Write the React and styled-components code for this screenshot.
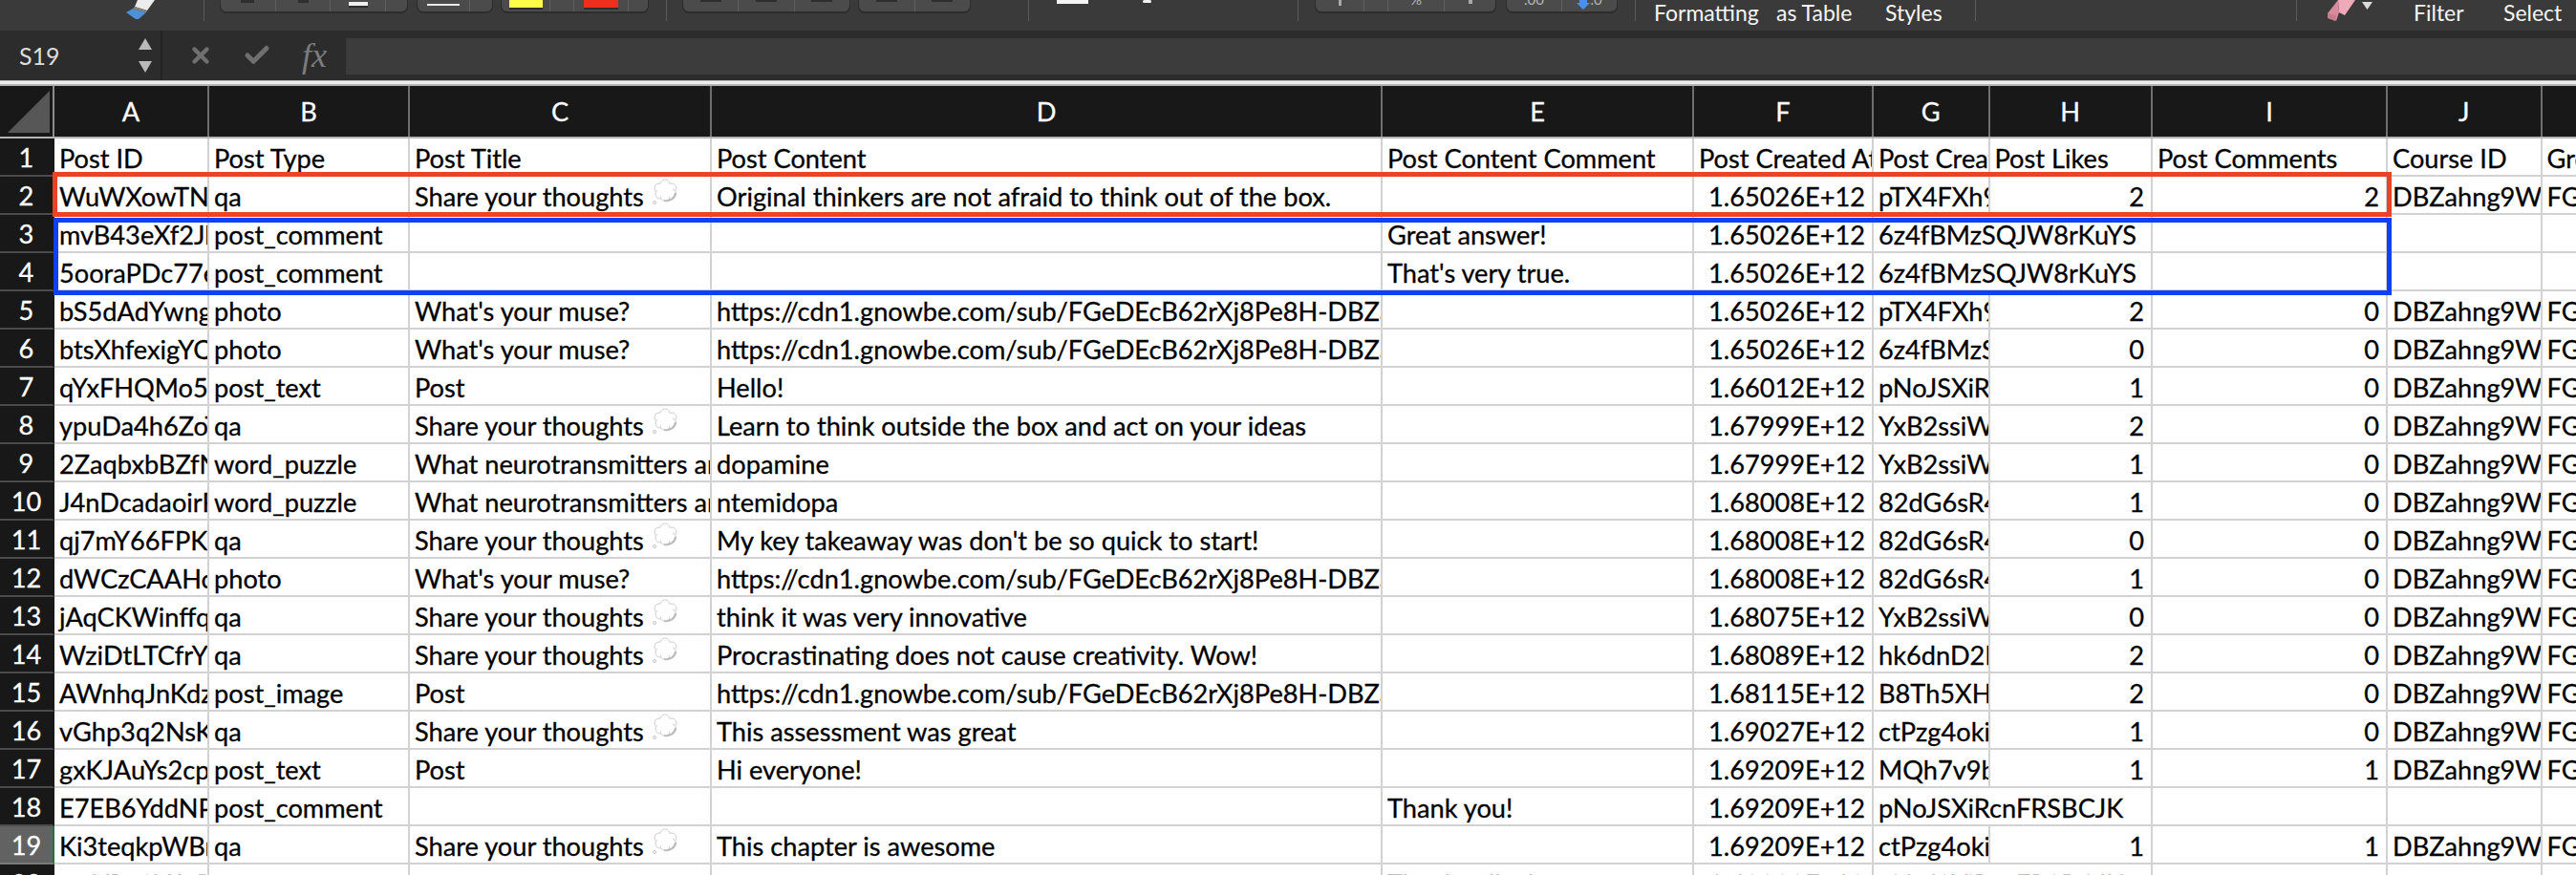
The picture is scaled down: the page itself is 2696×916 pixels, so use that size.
import React from "react";
import styled, { createGlobalStyle } from "styled-components";
import { X, Check } from "lucide-react";

const FONT = `Lato, "Open Sans", sans-serif`;
// K is wider than the window, so its letter falls outside the picture
const COLUMNS = "57px 162px 210px 316px 702px 326px 188px 121.5px 170.5px 246px 161.5px 200px";

const LETTERS = ["A", "B", "C", "D", "E", "F", "G", "H", "I", "J", "K"];

const THOUGHTS = "Share your thoughts";
const MUSE = "What's your muse?";
const NEURO = "What neurotransmitters are involved";
const CDN = "https://cdn1.gnowbe.com/sub/FGeDEcB62rXj8Pe8H-DBZahng9WIabc";

const rest = (likes, comments) => [likes, comments, "DBZahng9WIabcdef", "FGeDEcB62rXj8Pe8H"];

// A: id, B: type, C: title, D: content, E: comment, F: created at, G: creator, then H..K
const ROWS = [
  ["Post ID", "Post Type", "Post Title", "Post Content", "Post Content Comment", "Post Created At", "Post Creator ID", "Post Likes", "Post Comments", "Course ID", "Group ID"],
  ["WuWXowTNxyzab", "qa", THOUGHTS, "Original thinkers are not afraid to think out of the box.", "", "1.65026E+12", "pTX4FXh9abcd", ...rest(2, 2)],
  ["mvB43eXf2JlQw", "post_comment", "", "", "Great answer!", "1.65026E+12", "6z4fBMzSQJW8rKuYS"],
  ["5ooraPDc77eRt", "post_comment", "", "", "That's very true.", "1.65026E+12", "6z4fBMzSQJW8rKuYS"],
  ["bS5dAdYwngHjk", "photo", MUSE, CDN, "", "1.65026E+12", "pTX4FXh9abcd", ...rest(2, 0)],
  ["btsXhfexigYQnm", "photo", MUSE, CDN, "", "1.65026E+12", "6z4fBMzSQJW8", ...rest(0, 0)],
  ["qYxFHQMo5lKpr", "post_text", "Post", "Hello!", "", "1.66012E+12", "pNoJSXiRcnFR", ...rest(1, 0)],
  ["ypuDa4h6ZoTgb", "qa", THOUGHTS, "Learn to think outside the box and act on your ideas", "", "1.67999E+12", "YxB2ssiWJabc", ...rest(2, 0)],
  ["2ZaqbxbBZfNcv", "word_puzzle", NEURO, "dopamine", "", "1.67999E+12", "YxB2ssiWJabc", ...rest(1, 0)],
  ["J4nDcadaoirFwe", "word_puzzle", NEURO, "ntemidopa", "", "1.68008E+12", "82dG6sR4abcd", ...rest(1, 0)],
  ["qj7mY66FPKsdf", "qa", THOUGHTS, "My key takeaway was don't be so quick to start!", "", "1.68008E+12", "82dG6sR4abcd", ...rest(0, 0)],
  ["dWCzCAAHcrUio", "photo", MUSE, CDN, "", "1.68008E+12", "82dG6sR4abcd", ...rest(1, 0)],
  ["jAqCKWinffqPl", "qa", THOUGHTS, "think it was very innovative", "", "1.68075E+12", "YxB2ssiWJabc", ...rest(0, 0)],
  ["WziDtLTCfrY9mn", "qa", THOUGHTS, "Procrastinating does not cause creativity. Wow!", "", "1.68089E+12", "hk6dnD2Labcd", ...rest(2, 0)],
  ["AWnhqJnKdzGhj", "post_image", "Post", CDN, "", "1.68115E+12", "B8Th5XHLabcd", ...rest(2, 0)],
  ["vGhp3q2NsKzxc", "qa", THOUGHTS, "This assessment was great", "", "1.69027E+12", "ctPzg4okiabc", ...rest(1, 0)],
  ["gxKJAuYs2cpVb", "post_text", "Post", "Hi everyone!", "", "1.69209E+12", "MQh7v9bkabcd", ...rest(1, 1)],
  ["E7EB6YddNPqwe", "post_comment", "", "", "Thank you!", "1.69209E+12", "pNoJSXiRcnFRSBCJK"],
  ["Ki3teqkpWBrTy", "qa", THOUGHTS, "This chapter is awesome", "", "1.69209E+12", "ctPzg4okiabc", ...rest(1, 1)],
  ["mvXRo3YdnPxcv", "post_comment", "", "", "Thanks all, ok", "1.69209E+12", "pNoJSXiRcnFRSBCJK"],
];

const GlobalStyle = createGlobalStyle`
  html, body {
    margin: 0;
    height: 100%;
    overflow: hidden;
    background: #fff;
  }
  #root {
    height: 916px;
    overflow: hidden;
    font-family: ${FONT};
  }
`;

/* Ribbon, cut off at the top of the picture */
const Ribbon = styled.div`
  display: flex;
  align-items: flex-start;
  height: 32px;
  padding-left: 132px;
  background: #3a3a3a;
  overflow: hidden;
`;

const Sep = styled.div`
  flex: none;
  width: 1px;
  height: 22px;
  margin-left: ${(p) => p.$ml}px;
  background: #5a5a5a;
`;

const ToolGroup = styled.div`
  flex: none;
  display: flex;
  width: ${(p) => p.$w}px;
  height: 12px;
  margin-left: ${(p) => p.$ml}px;
  background: #4b4b4b;
  border-radius: 0 0 6px 6px;
  box-shadow: 0 1px 0 1px #2d2d2d;
  overflow: hidden;
`;

const ToolCell = styled.div`
  flex: ${(p) => (p.$w ? `0 0 ${p.$w}px` : "1 1 0")};
  display: flex;
  justify-content: center;
  align-items: flex-start;
  border-right: 1px solid #5f5f5f;
  &:last-child {
    border-right: 0;
  }
`;

const Glyph = styled.div`
  width: ${(p) => p.$w}px;
  height: ${(p) => p.$h}px;
  margin-top: ${(p) => p.$top || 0}px;
  background: ${(p) => p.$color};
  box-shadow: ${(p) => (p.$shadow ? "0 2px 0 #2e2e2e" : "none")};
`;

const ColorSwatch = styled(Glyph)`
  margin-left: ${(p) => p.$ml || 0}px;
  flex: none;
`;

const TinyText = styled.span`
  font-size: 15px;
  line-height: 15px;
  margin-top: -8px;
  color: ${(p) => p.$color || "#b5b5b5"};
`;

const PaperBit = styled.div`
  flex: none;
  width: ${(p) => p.$w}px;
  height: ${(p) => p.$h}px;
  margin-left: ${(p) => p.$ml}px;
  background: #f4f4f4;
  border-radius: ${(p) => p.$r || 0}px;
`;

const RibbonLabel = styled.div`
  flex: none;
  width: ${(p) => p.$w}px;
  margin-left: ${(p) => p.$ml}px;
  font-size: 23px;
  line-height: 26px;
  color: #f6f6f6;
  white-space: nowrap;
`;

const IconSlot = styled.svg`
  flex: none;
  display: block;
  margin-left: ${(p) => p.$ml || 0}px;
`;

/* Name box and formula input */
const FormulaBar = styled.div`
  display: flex;
  align-items: stretch;
  height: 52px;
  background: #2c2c2c;
`;

const NameBox = styled.div`
  flex: 0 0 170px;
  box-sizing: border-box;
  display: flex;
  align-items: center;
  justify-content: space-between;
  padding: 0 9px 0 20px;
  border-right: 2px solid #232323;
  font-size: 25px;
  color: #dcdcdc;
`;

const Stepper = styled.div`
  display: flex;
  flex-direction: column;
  gap: 12px;
`;

const Arrow = styled.div`
  width: 0;
  height: 0;
  border-left: 7px solid transparent;
  border-right: 7px solid transparent;
  border-${(p) => (p.$down ? "top" : "bottom")}: 12px solid #b9b9b9;
`;

const FormulaActions = styled.div`
  flex: 0 0 192px;
  box-sizing: border-box;
  display: flex;
  align-items: center;
  padding-left: 27px;
  gap: 31px;
  color: #6f6f6f;
`;

const FxLabel = styled.span`
  margin-left: 1px;
  font-family: "Liberation Serif", serif;
  font-style: italic;
  font-size: 36px;
  line-height: 36px;
  color: #7c7c7c;
`;

const FormulaInput = styled.div`
  flex: 1;
  margin: 8px 0 6px;
  background: #3c3c3c;
`;

const Divider = styled.div`
  box-sizing: border-box;
  height: 6px;
  background: #ececec;
  border-top: 1px solid #bcbcbc;
  border-bottom: 2px solid #b4b4b4;
`;

/* Sheet */
const Sheet = styled.div`
  position: relative;
  font-size: 27.2px;
  -webkit-text-stroke: 0.3px currentColor;
`;

const GridRow = styled.div`
  display: grid;
  grid-template-columns: ${COLUMNS};
  height: 40px;
`;

const HeaderRow = styled(GridRow)`
  height: 55px;
  background: #181818;
  border-bottom: 2px solid #b4b4b4;
  box-sizing: border-box;
`;

const Corner = styled.div`
  border-right: 2px solid #8c8c8c;
  display: flex;
  align-items: flex-end;
  padding-bottom: 4px;
`;

const ColumnHead = styled.div`
  display: flex;
  align-items: center;
  justify-content: center;
  border-right: 2px solid #6e6e6e;
  color: #fff;
`;

const RowHead = styled.div`
  box-sizing: border-box;
  display: flex;
  align-items: center;
  justify-content: center;
  background: ${(p) => (p.$active ? "#626262" : "#181818")};
  border-bottom: 2px solid ${(p) => (p.$active ? "#7a7a7a" : "#4c4c4c")};
  border-right: 2px solid ${(p) => (p.$active ? "#217346" : "#181818")};
  color: #fff;
`;

const Cell = styled.div`
  box-sizing: border-box;
  grid-column: span ${(p) => p.$span || 1};
  min-width: 0;
  height: 40px;
  padding: 0 ${(p) => (p.$right ? "7px" : "0")} 0 5px;
  overflow: hidden;
  white-space: nowrap;
  text-align: ${(p) => (p.$right ? "right" : "left")};
  line-height: 41px;
  color: #000;
  background: #fff;
  border-right: 2px solid #d2d2d2;
  border-bottom: 2px solid #d2d2d2;
`;

const Highlight = styled.div`
  position: absolute;
  box-sizing: border-box;
  left: ${(p) => p.$left}px;
  top: ${(p) => p.$top}px;
  width: ${(p) => p.$width}px;
  height: ${(p) => p.$height}px;
  border: 5px solid ${(p) => p.$color};
  pointer-events: none;
`;

const BalloonSvg = styled.svg`
  display: inline-block;
  width: 30px;
  height: 28px;
  margin-left: 7px;
  vertical-align: 1px;
`;

const Balloon = () => (
  <BalloonSvg viewBox="0 0 30 28">
    <g fill="#fff" stroke="#cfcfcf" strokeWidth="1">
      <circle cx="15" cy="6" r="5" />
      <circle cx="9" cy="10" r="5" />
      <circle cx="22" cy="10" r="5" />
      <circle cx="10" cy="16" r="5" />
      <circle cx="21" cy="16" r="5.5" />
      <circle cx="15" cy="19" r="4.5" />
    </g>
    <circle cx="15" cy="12" r="8" fill="#fff" />
    <path d="M14 23c6 1 11-2 12-8" fill="none" stroke="#bcbcbc" strokeWidth="2" />
    <circle cx="4" cy="25" r="1.5" fill="#fff" stroke="#c4c4c4" />
  </BalloonSvg>
);

const Brush = () => (
  <IconSlot width="30" height="21" viewBox="0 0 30 21">
    <path d="M12 0h18l-8 11L9 7z" fill="#ececec" />
    <path d="M9 7l13 4-1 2L7 9z" fill="#8b8577" />
    <path d="M7 9l14 4-8 7h-3L0 13z" fill="#4f8fd6" />
  </IconSlot>
);

const Eraser = () => (
  <IconSlot $ml={30} width="31" height="23" viewBox="0 0 31 23">
    <path d="M13 0h18l-11 16-6-3z" fill="#eeaab8" />
    <path d="M2 14L13 0l1 13-3 9z" fill="#d98a9c" />
    <path d="M2 14l9 2-1 6-8-3z" fill="#c77c8d" />
  </IconSlot>
);

const RibbonTriangle = () => (
  <IconSlot $ml={7} width="11" height="10" viewBox="0 0 11 10">
    <path d="M0 2h11l-5.5 8z" fill="#dcdcdc" />
  </IconSlot>
);

const BlueArrow = () => (
  <svg width="14" height="10" viewBox="0 0 14 10">
    <path d="M3 0h8v3h3L7 10 0 3h3z" fill="#4a8fe8" />
  </svg>
);

const isNumeric = (v) => typeof v === "number" || /E\+12$/.test(v);

const renderValue = (value) =>
  value === THOUGHTS ? (
    <>
      {value}
      <Balloon />
    </>
  ) : (
    value
  );

const SheetRow = ({ values, index }) => {
  // H is empty when the creator id runs over it: G then takes both columns
  const spill = values.length === 7;
  const cells = spill ? [...values, "", "", "", ""] : values;
  return (
    <GridRow>
      <RowHead $active={index === 19}>{index}</RowHead>
      {cells.map((value, i) =>
        spill && i === 7 ? null : (
          <Cell key={i} $right={isNumeric(value)} $span={spill && i === 6 ? 2 : 1}>
            {renderValue(value)}
          </Cell>
        )
      )}
    </GridRow>
  );
};

const App = () => (
  <>
    <GlobalStyle />
    <Ribbon>
      <Brush />
      <Sep $ml={51} />
      <ToolGroup $w={195} $ml={17}>
        <ToolCell><Glyph $w={14} $h={3} $color="#2e2e2e" /></ToolCell>
        <ToolCell><Glyph $w={11} $h={3} $color="#2e2e2e" /></ToolCell>
        <ToolCell><Glyph $w={20} $h={4} $top={2} $color="#eee" $shadow /></ToolCell>
        <ToolCell $w={22} />
      </ToolGroup>
      <ToolGroup $w={78} $ml={11}>
        <ToolCell $w={54}><Glyph $w={34} $h={2} $top={4} $color="#e8e8e8" /></ToolCell>
        <ToolCell />
      </ToolGroup>
      <ToolGroup $w={153} $ml={10}>
        <ToolCell $w={50}><ColorSwatch $w={35} $h={8} $color="#fdfd49" $shadow /></ToolCell>
        <ToolCell $w={24} />
        <ToolCell $w={56}><ColorSwatch $w={36} $h={8} $color="#ee2f1d" $shadow /></ToolCell>
        <ToolCell />
      </ToolGroup>
      <Sep $ml={19} />
      <ToolGroup $w={174} $ml={17}>
        <ToolCell><Glyph $w={22} $h={2} $color="#2e2e2e" /></ToolCell>
        <ToolCell><Glyph $w={22} $h={2} $color="#2e2e2e" /></ToolCell>
        <ToolCell><Glyph $w={22} $h={2} $color="#2e2e2e" /></ToolCell>
      </ToolGroup>
      <ToolGroup $w={116} $ml={10}>
        <ToolCell><Glyph $w={22} $h={2} $color="#2e2e2e" /></ToolCell>
        <ToolCell><Glyph $w={22} $h={2} $color="#2e2e2e" /></ToolCell>
      </ToolGroup>
      <Sep $ml={61} />
      <PaperBit $w={33} $h={4} $ml={29} />
      <PaperBit $w={9} $h={3} $r={3} $ml={57} />
      <Sep $ml={153} />
      <ToolGroup $w={188} $ml={18}>
        <ToolCell $w={50}><Glyph $w={3} $h={6} $color="#a9a9a9" /></ToolCell>
        <ToolCell $w={24} />
        <ToolCell $w={58}><TinyText>%</TinyText></ToolCell>
        <ToolCell><Glyph $w={4} $h={4} $color="#a9a9a9" /></ToolCell>
      </ToolGroup>
      <ToolGroup $w={115} $ml={12}>
        <ToolCell $w={57}><TinyText>.00</TinyText></ToolCell>
        <ToolCell><BlueArrow /><TinyText>.0</TinyText></ToolCell>
      </ToolGroup>
      <Sep $ml={19} />
      <RibbonLabel $w={109} $ml={19}>Formatting</RibbonLabel>
      <RibbonLabel $w={81} $ml={19}>as Table</RibbonLabel>
      <RibbonLabel $w={61} $ml={33}>Styles</RibbonLabel>
      <Sep $ml={33} />
      <Sep $ml={335} />
      <Eraser />
      <RibbonTriangle />
      <RibbonLabel $w={49} $ml={43}>Filter</RibbonLabel>
      <RibbonLabel $w={63} $ml={45}>Select</RibbonLabel>
    </Ribbon>
    <FormulaBar>
      <NameBox>
        S19
        <Stepper>
          <Arrow />
          <Arrow $down />
        </Stepper>
      </NameBox>
      <FormulaActions>
        <X size={26} strokeWidth={4} />
        <Check size={30} strokeWidth={4} />
        <FxLabel>fx</FxLabel>
      </FormulaActions>
      <FormulaInput />
    </FormulaBar>
    <Divider />
    <Sheet>
      <HeaderRow>
        <Corner>
          <svg width="52" height="44" viewBox="0 0 52 44">
            <path d="M52 0v44H8z" fill="#575757" />
          </svg>
        </Corner>
        {LETTERS.map((letter) => (
          <ColumnHead key={letter}>{letter}</ColumnHead>
        ))}
      </HeaderRow>
      {ROWS.map((values, i) => (
        <SheetRow key={i} values={values} index={i + 1} />
      ))}
      <Highlight $left={55} $top={90} $width={2448} $height={47} $color="#ea4328" />
      <Highlight $left={56} $top={138} $width={2447} $height={81} $color="#0f40f5" />
    </Sheet>
  </>
);

export default App;
